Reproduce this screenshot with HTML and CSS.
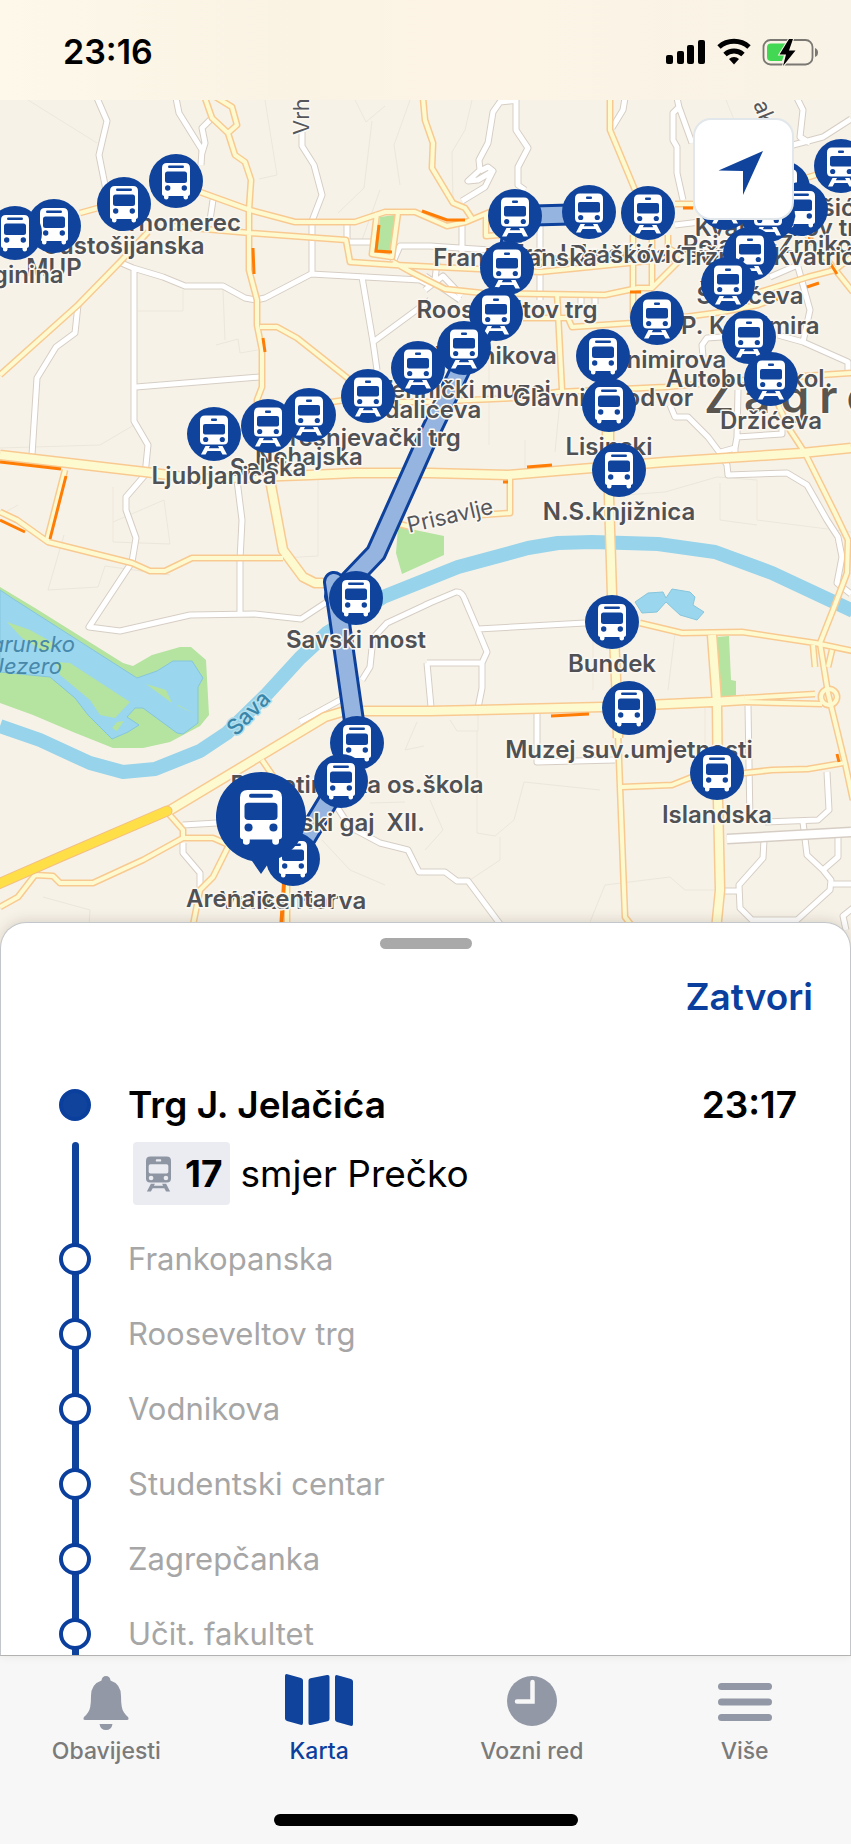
FILE: index.html
```html
<!DOCTYPE html>
<html lang="hr">
<head>
<meta charset="utf-8">
<meta name="viewport" content="width=device-width, initial-scale=1">
<title>Karta</title>
<link rel="stylesheet" href="styles.css">
</head>
<body>
<div class="app">
  <header class="status">
    <time class="status-time">23:16</time>
    <svg class="status-icons" viewBox="664 36 158 32" aria-hidden="true">
      <rect x="666" y="55" width="7" height="9" rx="2"/>
      <rect x="677" y="51" width="7" height="13" rx="2"/>
      <rect x="687" y="45" width="7" height="19" rx="2"/>
      <rect x="698" y="40" width="7" height="24" rx="2"/>
      <path d="M719 47a22.500 22.500 0 0 1 30 0" fill="none" stroke="#000" stroke-width="5"/>
      <path d="M725 54.500a13.500 13.500 0 0 1 18 0" fill="none" stroke="#000" stroke-width="5"/>
      <path d="M729 59a7.500 7.500 0 0 1 10 0L734 64.500z"/>
      <rect x="763.500" y="40" width="49" height="24.500" rx="7" fill="none" stroke="#7b7873" stroke-width="1.800"/>
      <path d="M815 48q3 1 3 4.500t-3 4.500z" fill="#7b7873"/>
      <path d="M771 43.500h17l-6 17.500h-11q-4 0-4-4v-9.500q0-4 4-4z" fill="#43d854"/>
      <path d="M789 39l-9.500 15.500h6.500L783 66l12.500-15.500h-6.500L793 39z" fill="#000" stroke="#fbf4e6" stroke-width="2" paint-order="stroke"/>
    </svg>
  </header>

  <main class="map">
    <svg class="map-canvas" viewBox="0 100 851 850" preserveAspectRatio="xMidYMin slice" role="img" aria-label="Karta Zagreba">
      <defs>
        <g id="bus-glyph">
          <path fill="#fff" d="M-9-18H9q5 0 5 5V13q0 1.500-2 2v1.500q0 2-2.200 2t-2.300-2V15h-15v1.500q0 2-2.300 2t-2.200-2V15q-2-.5-2-2V-13q0-5 5-5z"/>
          <rect x="-8" y="-15.500" width="16" height="2.600" rx="1.300"/>
          <rect x="-11" y="-9.500" width="22" height="11.500" rx="2.500"/>
          <circle cx="-8.300" cy="7" r="2.700"/><circle cx="8.300" cy="7" r="2.700"/>
        </g>
        <g id="tram-glyph">
          <path fill="#fff" d="M-9-18.500H9q5 0 5 5V6q0 4.500-4.500 4.500h-19Q-14 10.500-14 6v-19.500q0-5 5-5z"/>
          <path fill="#fff" d="M-8.500 12h4.500l-1.200 2.200H5.200L4 12h4.500l4.500 8.500H8.500L6.500 17h-13l-2 3.500H-13z"/>
          <rect x="-3" y="-15.500" width="6" height="2.600" rx="1"/>
          <rect x="-11" y="-10" width="22" height="10.500" rx="2"/>
          <circle cx="-8.300" cy="5.500" r="2.600"/><circle cx="8.300" cy="5.500" r="2.600"/>
        </g>
        <g id="bus"><circle r="27"/><use href="#bus-glyph"/></g>
        <g id="tram"><circle r="27"/><use href="#tram-glyph"/></g>
        <g id="white-roads">
          <path d="M97 98L107 121 99 155 106 190M176 98L179 113 202 150 201 165M213 117L202 128 205 143 202 153M302 132V146L314 165 322 195 312 221V274M119 262L133 268 163 277 185 286H223L245 298 256 300 265 298 311 274 420 280 432 286M134 268V421L148 445 145 475 126 497V510L136 538 132 562 89 627 120 631 190 615 255 614 301 619 333 598"/>
          <path d="M78 305L75 333 56 347 37 378 32 455M136 387L260 377M237 480L242 520 240 560V615M362 277L373 342 377 370M373 342L430 300M213 200L210 220M347 224V242H375M393 262L400 246H430L490 250"/>
          <path d="M518 100L500 102 493 112 488 143 479 160 480 170 468 181 478 180 493 171 488 167 480 171M493 171L485 187 462 201M516 98V130L528 148 518 167V185L525 190M625 98L623 110 612 128M677 98L679 107 673 113V140L677 147V173L683 200M679 107L692 143M797 98L803 110 800 137 810 143M793 145L823 137 851 119M462 221V255M540 220V300M675 225L700 222"/>
          <path d="M425 290L443 276 462 296M437 262L435 280M425 276L460 300M581 294V304M595 294V304M798 267L810 310 803 342M778 335L803 342 848 362V372M722 337L707 338 702 345 703 357M770 277L800 264M670 405L675 417H688L708 437 720 453 727 465 728 475 787 473 807 485 827 520 838 537 842 557 837 583 851 594M717 453L735 448V453M735 448L737 437 782 434V425M737 437L738 390"/>
          <path d="M430 603L387 623 373 638 370 667 362 680M427 663L431 707M427 663H482L487 652 477 628 465 600Q462 591 456 592L425 605M478 629L585 623M482 663V688L478 708M748 706L750 822M537 713V762L615 760M827 772L829 810 818 820 765 822M803 822L807 855 823 870 831 880 830 890 797 920H752L740 908 739 885 763 858 764 840M838 835V857L823 870M831 884H851M725 891H740M853 908L843 916 846 930"/>
          <path d="M300 722L340 700M183 825L217 823M183 843V853L200 873V889M337 807L350 827 380 843 408 850 419 872H445L457 881H468L500 924"/>
        </g>
        <g id="yellow-roads">
          <path d="M205 98L212 118 228 133 235 155 245 162 251 180 249 210V270L257 300V325L262 350V387L257 400V410M214 96L232 107 237 125 228 133M80 213L98 208M200 192L250 210 295 222H355L385 212H415L447 226 466 222 490 212M0 375L78 305 120 262 148 232M170 226L250 233 346 240 350 262 395 265 540 272 678 258M377 213L372 254 392 257 398 213M393 262L411 272 445 289 482 293 605 295 638 288H652L678 262"/>
          <path d="M423 98L425 120 433 143 432 168 453 203 465 208 473 220M610 98V130L635 190M486 215V236L500 235M557 293L562 390M633 235V318M652 235V288M668 235V248L680 255M675 204H695M806 178L825 172M523 318H568L572 327 632 323 685 317 722 312 758 305 778 297M760 292L808 277 835 270 853 256M806 234L833 267 853 292"/>
          <path d="M260 327H277L297 338 350 380M325 403L345 400M365 402H425L515 398 558 392 665 387 745 380 851 373M65 470L47 540M0 512L17 520 48 542 132 563 150 571H165L192 558H283M510 478V513L480 515M395 523L415 528M605 425V450M770 385L788 427 805 453 835 513 848 540 847 573 833 610 820 643 828 693 845 763 853 800"/>
          <path d="M640 623L682 633 742 632 815 643 853 651M622 787L672 785 692 777 745 773 772 770 808 769 843 763M813 645L815 667M832 650L828 667M745 698L815 694M745 702L822 704M618 733L620 787 625 917 632 926M0 907L18 897 35 875 53 876 60 883H93L143 860 183 838H213L229 845 213 877 200 890 192 930M168 813L183 830V838M262 760L273 776M287 883V930"/>
        </g>
        <g id="yellow-main">
          <path d="M0 455L145 472 200 479 310 475 355 473H430L508 475 592 468 665 462 802 453 851 448M270 480L283 550 303 577 315 583H332M609 425V497L612 595 617 700 618 738"/>
          <path d="M167 812L300 732 325 717 345 711H430L478 710 602 707 712 702 745 700M712 635L717 703 718 800 720 890 716 930"/>
        </g>
      </defs>

      <rect class="land" y="100" width="851" height="850"/>
      <g class="tracts">
        <path d="M28 100L97 143M265 100L277 175 259 179M355 100L366 122 385 106M410 100L394 145 400 185M372 121L364 188 338 213M380 190L362 240M138 311H183V290M223 290L225 340M216 345L238 339 240 353 258 350M0 448L100 445 134 425M113 487V542L170 544 164 500 113 522M64 535L48 590 98 587 105 566 170 575M318 480V556L245 560M472 100L465 130 452 152 453 202M726 100L735 122"/>
        <path d="M489 355V445M525 440V470M555 452L562 380M625 495L665 492 717 477 757 480V520L851 532M720 483V520L757 525M593 632V690M675 633L668 690M705 700V750M450 720L457 731H478V714M477 731V833L495 836 514 820 524 782 600 790M500 837V860L470 880M417 722L405 750 424 746M430 800L443 830 425 850M590 922L605 885 670 877 685 890H720M405 802L370 803M322 840L350 870 385 885M43 897L90 910 88 940M0 515L18 505"/>
      </g>
      <g class="park">
        <path d="M0 587L35 608 123 663 133 666 152 655 180 647H191L206 660 209 715 200 726 170 742 143 748H113L73 732 33 715 0 703z"/>
        <path d="M380 217L395 215 392 252 376 251zM398 527L415 530 444 536V555L402 574 396 553zM717 637L729 636 731 680 736 681V696L720 697z"/>
      </g>
      <g class="water">
        <path d="M0 590L15 600 137 678 157 671 173 661H192L203 678 198 687V723L183 734 177 733 143 708H135L127 717 139 725 128 732 112 739 88 715 75 698 50 677 0 672z"/>
        <path d="M635 602L648 593 663 592 666 598 672 589 690 592 695 597 693 605 704 612 697 620 680 615 666 602 657 612 642 613z"/>
      </g>
      <path class="park" d="M55 662L70 663 130 702 115 718 100 715 90 700 60 675zM146 684L166 690 172 703zM7 622L30 630 57 645 45 652 22 638zM112 728L117 722 124 721 117 731zM178 705L195 714 178 706z"/>
      <path class="river" d="M0 726L40 740 90 763 123 772 155 769 200 751 227 733 267 694 300 658 327 633 383 597 458 567 528 548 558 543 592 542 658 544 715 552 772 573 853 611"/>

      <use href="#white-roads" class="road white-edge"/>
      <use href="#white-roads" class="road white-fill"/>
      <path class="road white-edge wide" d="M727 839L851 832"/>
      <path class="road white-fill wide-fill" d="M727 839L853 832"/>
      <use href="#yellow-roads" class="road yellow-edge"/>
      <use href="#yellow-main" class="road yellow-edge wide"/>
      <circle cx="829" cy="697" r="8" class="road yellow-edge"/>
      <circle cx="829" cy="697" r="8" class="road yellow-fill"/>
      <use href="#yellow-roads" class="road yellow-fill"/>
      <use href="#yellow-main" class="road yellow-fill wide-fill"/>
      <path class="road motorway-edge" d="M-4 885L60 857 167 811"/>
      <path class="road motorway-fill" d="M-4 885L60 857 167 811"/>
      <path class="traffic" d="M379 225L376 251 392 252M253 248L254 274M422 211L447 220H465M683 208H693M0 462L61 469M66 476L50 539M0 520L25 532M263 338L265 352M527 467L552 465M503 482H508M551 716L589 714M837 754L839 762M807 287L819 283M830 263L837 274M630 292H641M808 238L813 239M776 300L779 297"/>
      <path class="traffic heavy" d="M284 883L281 930"/>

      <text class="city" x="704" y="413">Zagreb</text>
      <text class="street" transform="translate(309 135) rotate(-90)">Vrh</text>
      <text class="street" transform="translate(753 104) rotate(68)">ak</text>
      <text class="street" transform="translate(409 533) rotate(-13)">Prisavlje</text>
      <text class="water-name" transform="translate(236 737) rotate(-46)">Sava</text>
      <g class="lake-name"><text x="75" y="652">Jarunsko</text><text x="62" y="674">Jezero</text></g>

      <g class="route">
        <path class="route-edge" d="M589 214L515 216 507 268 496 314 464 362 428 437 376 553 335 596"/>
        <path class="route-fill" d="M589 214L515 216 507 268 496 314 464 362 428 437 376 553 335 596"/>
        <path class="route-edge" d="M334 582L356 735 342 778 293 859"/>
        <path class="route-fill" d="M334 582L356 735 342 778 293 859"/>
      </g>

      <g class="stops">
        <g transform="translate(841 166)"><text y="50">Mašićeva</text><use href="#tram"/></g>
        <g transform="translate(176 181)"><text y="50">Črnomerec</text><use href="#bus"/></g>
        <g transform="translate(783 188)"><text y="48">Kvaternikov trg</text><use href="#tram"/></g>
        <g transform="translate(725 203)"><use href="#tram"/></g>
        <g transform="translate(124 204)"><text y="50">Sustošijanska</text><use href="#bus"/></g>
        <g transform="translate(801 209)"><text x="-20" y="44">Pejačić-Zrnikova</text><use href="#bus"/></g>
        <g transform="translate(589 212)"><text y="50">Trg J.Jelačića</text><use href="#tram"/></g>
        <g transform="translate(648 213)"><text y="50">Draškovićeva</text><use href="#tram"/></g>
        <g transform="translate(768 215)"><text y="50">Tržnica Kvatrić</text><use href="#tram"/></g>
        <g transform="translate(515 216)"><text y="50">Frankopanska</text><use href="#tram"/></g>
        <g transform="translate(54 226)"><text y="50">MUP</text><use href="#bus"/></g>
        <g transform="translate(15 233)"><text y="50">Vrginina</text><use href="#bus"/></g>
        <g transform="translate(750 254)"><text y="50">Šubićeva</text><use href="#tram"/></g>
        <g transform="translate(507 268)"><text y="50">Rooseveltov trg</text><use href="#tram"/></g>
        <g transform="translate(728 284)"><text y="50">Trg P. Krešimira</text><use href="#tram"/></g>
        <g transform="translate(496 314)"><text y="50">Vodnikova</text><use href="#tram"/></g>
        <g transform="translate(657 318)"><text y="50">Branimirova</text><use href="#tram"/></g>
        <g transform="translate(749 337)"><text y="50">Autobusni kol.</text><use href="#tram"/></g>
        <g transform="translate(464 348)"><text y="50">Tehnički muzej</text><use href="#tram"/></g>
        <g transform="translate(603 356)"><text y="50">Glavni kolodvor</text><use href="#bus"/></g>
        <g transform="translate(418 368)"><text y="50">Badalićeva</text><use href="#tram"/></g>
        <g transform="translate(771 379)"><text y="50">Držićeva</text><use href="#tram"/></g>
        <g transform="translate(368 396)"><text y="50">Trešnjevački trg</text><use href="#tram"/></g>
        <g transform="translate(609 405)"><text y="50">Lisinski</text><use href="#bus"/></g>
        <g transform="translate(309 415)"><text y="50">Nehajska</text><use href="#tram"/></g>
        <g transform="translate(268 426)"><text y="50">Selska</text><use href="#tram"/></g>
        <g transform="translate(214 434)"><text y="50">Ljubljanica</text><use href="#tram"/></g>
        <g transform="translate(619 470)"><text y="50">N.S.knjižnica</text><use href="#bus"/></g>
        <g transform="translate(356 598)"><text y="50">Savski most</text><use href="#bus"/></g>
        <g transform="translate(612 622)"><text y="50">Bundek</text><use href="#bus"/></g>
        <g transform="translate(629 708)"><text y="50">Muzej suv.umjetnosti</text><use href="#bus"/></g>
        <g transform="translate(357 743)"><text y="50">Remetinečka os.škola</text><use href="#bus"/></g>
        <g transform="translate(717 773)"><text y="50">Islandska</text><use href="#bus"/></g>
        <g transform="translate(341 781)"><text y="50">Savski gaj&#160; XII.</text><use href="#bus"/></g>
        <g transform="translate(293 859)"><text y="50">Velika Horva</text><use href="#bus"/></g>
        <g transform="translate(261 817)">
          <text y="90">Arena centar</text>
          <path d="M0 57L-9 44A45 45 0 1 1 9 44z"/>
          <use href="#bus-glyph" transform="scale(1.500)"/>
        </g>
      </g>
    </svg>
    <button class="locate" type="button" aria-label="Moja lokacija">
      <svg viewBox="3 -4 46 46" aria-hidden="true"><path d="M0.500 20.500L45 1 25 45V21z"/></svg>
    </button>
  </main>

  <section class="sheet" aria-label="Detalji putovanja">
    <div class="handle"></div>
    <div class="sheet-actions"><button class="close" type="button">Zatvori</button></div>
    <ol class="timeline">
      <li class="start"><span>Trg J. Jelačića</span><time>23:17</time></li>
      <li class="leg">
        <span class="line-badge">
          <svg viewBox="-14 -19 28 40" aria-hidden="true">
            <path fill="#8e96a3" d="M-9-18.500H9q5 0 5 5V6q0 4.500-4.500 4.500h-19Q-14 10.500-14 6v-19.500q0-5 5-5z"/>
            <path fill="#8e96a3" d="M-8.500 12h4.500l-1.200 2.200H5.200L4 12h4.500l4.500 8.500H8.500L6.500 17h-13l-2 3.500H-13z"/>
            <g fill="#ebebf2"><rect x="-3" y="-15.500" width="6" height="2.600" rx="1"/><rect x="-11" y="-10" width="22" height="10.500" rx="2"/><circle cx="-8.300" cy="5.500" r="2.600"/><circle cx="8.300" cy="5.500" r="2.600"/></g>
          </svg>
          <b>17</b>
        </span>
        <span>smjer Prečko</span>
      </li>
      <li class="stop">Frankopanska</li>
      <li class="stop">Rooseveltov trg</li>
      <li class="stop">Vodnikova</li>
      <li class="stop">Studentski centar</li>
      <li class="stop">Zagrepčanka</li>
      <li class="stop">Učit. fakultet</li>
    </ol>
  </section>

  <nav class="tabs">
    <div class="tab-row">
      <a class="tab" href="#obavijesti">
        <svg viewBox="-35 0 70 58" aria-hidden="true"><path d="M0 4q4 0 4.500 4.500Q15 12 15 24q0 13 3 16.500 2 3 4 4.500 1.500 3-1 3h-42q-2.500 0-1-3 2-1.500 4-4.500 3-3.500 3-16.500 0-12 10.500-15.500Q-4 4 0 4zM-6.500 52h13q-1 6-6.500 6T-6.500 52z"/></svg>
        <span>Obavijesti</span>
      </a>
      <a class="tab active" href="#karta" aria-current="page">
        <svg viewBox="-35 0 70 58" aria-hidden="true"><path d="M-34 4q0-2.500 2.500-1.800L-18 6q2 .6 2 2.500V51q0 2.500-2.500 1.800L-32 49q-2-.6-2-2.500zM-10.500 8.500q0-1.800 2-2.300L8 3q2.500-.5 2.500 1.800V47q0 1.800-2 2.300L-8 53q-2.500.5-2.500-1.800zM16 5q0-2.500 2.500-1.800L32 7q2 .6 2 2.500V52q0 2.500-2.500 1.800L18 50q-2-.6-2-2.500z"/></svg>
        <span>Karta</span>
      </a>
      <a class="tab" href="#vozni-red">
        <svg viewBox="-35 0 70 58" aria-hidden="true"><circle cy="29" r="25"/><path d="M.5 10V29.500H-15" fill="none" stroke="#f7f7f7" stroke-width="4.500" stroke-linecap="round"/></svg>
        <span>Vozni red</span>
      </a>
      <a class="tab" href="#vise">
        <svg viewBox="-35 0 70 58" aria-hidden="true"><rect x="-27" y="11" width="54" height="7" rx="3.500"/><rect x="-27" y="26.500" width="54" height="7" rx="3.500"/><rect x="-27" y="42" width="54" height="7" rx="3.500"/></svg>
        <span>Više</span>
      </a>
    </div>
    <div class="home-indicator"></div>
  </nav>
</div>
</body>
</html>
```
FILE: styles.css
```css
*, *::before, *::after { box-sizing: border-box; }

body {
  margin: 0;
  font-family: Inter, "Noto Sans", sans-serif;
  color: #000;
  background: #f7f7f7;
}

button { border: 0; padding: 0; font: inherit; cursor: pointer; }

.app {
  display: flex;
  flex-direction: column;
  height: 100vh;
  overflow: hidden;
}

/* Status bar */
.status {
  flex: none;
  display: flex;
  align-items: center;
  justify-content: space-between;
  height: 100px;
  padding: 4px 29px 0 63px;
  background: linear-gradient(90deg, #fdf8ea, #faf3e4 35%, #fdf4e5 55%, #f8f3e6);
}
.status-time { font-size: 34px; line-height: 40px; font-weight: 600; }
.status-icons { width: 158px; height: 32px; }

/* Map */
.map { position: relative; flex: none; margin-bottom: -28px; }
.map-canvas { display: block; width: 100%; height: auto; }
.land { fill: #f7f2e8; }
.tracts { fill: none; stroke: #ece7db; stroke-width: 1; }
.park { fill: #b5e3a0; }
.water { fill: #9bd6ef; stroke: #86c6dc; stroke-width: 1; }
.river { fill: none; stroke: #97d3ea; stroke-width: 14; stroke-linejoin: round; }

.road { fill: none; stroke-linejoin: round; }
.white-edge { stroke: #d6cec5; stroke-width: 7; }
.white-fill { stroke: #fff; stroke-width: 5; }
.yellow-edge { stroke: #f8ca91; stroke-width: 7; }
.yellow-fill { stroke: #fefad0; stroke-width: 4; }
.wide { stroke-width: 11; }
.wide-fill { stroke-width: 8; }
.motorway-edge { stroke: #f3bf83; stroke-width: 11; stroke-linecap: round; }
.motorway-fill { stroke: #ffdf47; stroke-width: 9; stroke-linecap: round; }
.traffic { fill: none; stroke: #ff7d05; stroke-width: 3; }
.heavy { stroke-width: 4; }

.map-canvas text { paint-order: stroke; stroke: #fbf8f2; stroke-width: 3px; stroke-linejoin: round; }
.map-canvas .city { font-size: 46px; font-weight: 600; letter-spacing: 10px; fill: #5a554f; }
.map-canvas .street { font-size: 22px; fill: #55565a; }
.map-canvas .water-name { font-size: 22px; font-weight: 500; fill: #3a86a8; stroke: #b3dfef; }
.map-canvas .lake-name text { font-size: 22px; font-style: italic; fill: #4788aa; stroke: none; text-anchor: end; }

.route-edge, .route-fill { fill: none; stroke-linejoin: round; stroke-linecap: round; }
.route-edge { stroke: #0d419c; stroke-width: 22; }
.route-fill { stroke: #95b4e0; stroke-width: 16; }

.stops { fill: #10449c; }
.map-canvas .stops text { font-size: 24px; font-weight: 600; fill: #505154; text-anchor: middle; }

.locate {
  position: absolute;
  top: 18px;
  right: 57px;
  display: grid;
  place-items: center;
  width: 101px;
  height: 102px;
  border: 2px solid #e1e7ea;
  border-radius: 18px;
  background: #fff;
}
.locate svg { width: 46px; height: 46px; overflow: visible; fill: #10449c; }

/* Journey sheet */
.sheet {
  position: relative;
  flex: 1;
  min-height: 0;
  overflow: hidden;
  padding: 15px 37px 0;
  border: 1px solid #c3c6ca;
  border-bottom: 0;
  border-radius: 26px 26px 0 0;
  background: #fff;
  box-shadow: 0 -2px 12px rgba(60, 50, 30, 0.15);
}
.handle { width: 92px; height: 11px; margin: 0 auto 24px; border-radius: 6px; background: #a9a9a9; }
.sheet-actions { display: flex; justify-content: flex-end; }
.close { background: none; color: #0b3f9e; font-size: 37px; line-height: 48px; font-weight: 600; }

.timeline { margin: 60px 0 0; padding: 0; list-style: none; }
.timeline li {
  position: relative;
  display: flex;
  align-items: center;
  padding-left: 90px;
}
.start { justify-content: space-between; padding-right: 16px; font-size: 37px; line-height: 48px; font-weight: 600; }
.timeline .leg { gap: 10px; height: 79px; margin-top: 13px; padding: 0 0 16px 95px; font-size: 37px; }
.line-badge {
  display: flex;
  align-items: center;
  gap: 14px;
  height: 63px;
  padding: 0 8px 0 13px;
  border-radius: 4px;
  background: #ebebf2;
}
.line-badge svg { width: 25px; height: 36px; }
.line-badge b { font-weight: 700; }
.stop { height: 75px; font-size: 31px; color: #a6a6a6; }

.leg::before, .stop::before {
  content: "";
  position: absolute;
  left: 34px;
  top: 0;
  bottom: 0;
  width: 7px;
  background: #10449c;
}
.leg::before { border-radius: 4px 4px 0 0; }
.start::after, .stop::after {
  content: "";
  position: absolute;
  left: 21px;
  width: 32px;
  height: 32px;
  border: 4px solid #0b3f9e;
  border-radius: 50%;
  background: #fff;
}
.start::after { background: #10449c; }

/* Tab bar */
.tabs {
  flex: none;
  display: flex;
  flex-direction: column;
  align-items: center;
  justify-content: space-between;
  height: 189px;
  padding: 16px 0 18px;
  border-top: 1px solid #b9b9b9;
  background: #f7f7f7;
}
.tab-row { display: grid; grid-template-columns: repeat(4, 1fr); width: 100%; }
.tab {
  display: flex;
  flex-direction: column;
  align-items: center;
  gap: 5px;
  color: #7a7a7a;
  font-size: 23px;
  line-height: 32px;
  font-weight: 500;
  text-decoration: none;
}
.tab svg { width: 70px; height: 58px; fill: #9298a5; }
.tab.active { color: #0b3f9e; }
.tab.active svg { fill: #10449c; }
.home-indicator { width: 304px; height: 12px; border-radius: 6px; background: #000; }
```
